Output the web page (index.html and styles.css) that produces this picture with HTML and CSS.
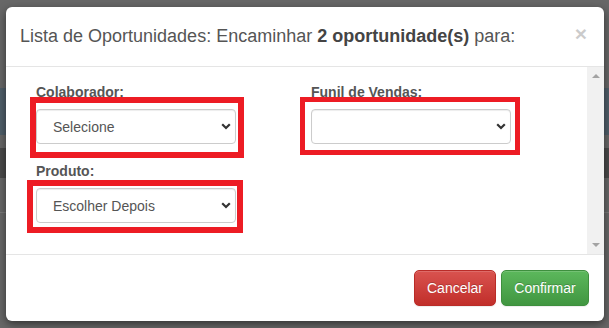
FILE: index.html
```html
<!DOCTYPE html>
<html lang="pt-BR">
<head>
    <meta charset="UTF-8">
    <title>Encaminhar Oportunidades</title>
    <link rel="stylesheet" href="styles.css">
</head>
<body>

    <div class="page">
        <div class="band band-top"></div>
        <div class="band band-blue"></div>
        <div class="band band-dark"></div>
        <div class="band band-line"></div>
    </div>

    <div class="modal">
        <div class="modal-header">
            <h4 class="modal-title">Lista de Oportunidades: Encaminhar <b>2 oportunidade(s)</b> para:</h4>
            <span class="close">&times;</span>
        </div>

        <div class="modal-body">
            <div class="body-content">
                <div class="row">
                    <div class="col">
                        <div class="form-group">
                            <label>Colaborador:</label>
                            <div class="select-wrap">
                                <select>
                                    <option>Selecione</option>
                                </select>
                                <svg class="chevron" width="10" height="7" viewBox="0 0 10 7"><path d="M1.2 1.2 L5 5 L8.8 1.2" fill="none" stroke="#333" stroke-width="2.2"/></svg>
                            </div>
                        </div>
                        <div class="form-group">
                            <label>Produto:</label>
                            <div class="select-wrap">
                                <select>
                                    <option>Escolher Depois</option>
                                </select>
                                <svg class="chevron" width="10" height="7" viewBox="0 0 10 7"><path d="M1.2 1.2 L5 5 L8.8 1.2" fill="none" stroke="#333" stroke-width="2.2"/></svg>
                            </div>
                        </div>
                    </div>
                    <div class="col">
                        <div class="form-group">
                            <label>Funil de Vendas:</label>
                            <div class="select-wrap">
                                <select>
                                    <option></option>
                                </select>
                                <svg class="chevron" width="10" height="7" viewBox="0 0 10 7"><path d="M1.2 1.2 L5 5 L8.8 1.2" fill="none" stroke="#333" stroke-width="2.2"/></svg>
                            </div>
                        </div>
                    </div>
                </div>
            </div>
            <div class="scrollbar">
                <span class="arrow-up"></span>
                <span class="arrow-down"></span>
            </div>
        </div>

        <div class="modal-footer">
            <button class="btn btn-danger">Cancelar</button>
            <button class="btn btn-success">Confirmar</button>
        </div>
    </div>

    <!-- marcações em vermelho -->
    <div class="mark mark-colaborador"></div>
    <div class="mark mark-produto"></div>
    <div class="mark mark-funil"></div>

</body>
</html>
```

FILE: styles.css
```css
body {
    margin: 0;
    width: 609px;
    height: 328px;
    overflow: hidden;
    background: #676767;
    font-family: "Liberation Sans", Arial, sans-serif;
    position: relative;
}
.page {
    display: flex;
    flex-direction: column;
}
.band-top { height: 88px; }
.band-blue { height: 47px; background: #4f5e69; }
.band-dark { height: 30px; background: #4a4a4a; margin-top: 13px; }
.band-line { height: 1px; background: #7a7a7a; margin-top: 34px; }

.modal {
    position: absolute;
    left: 6px;
    top: 7px;
    width: 598px;
    height: 314px;
    background: #fff;
    border-radius: 6px;
    box-shadow: 0 3px 9px rgba(0, 0, 0, 0.5);
    display: flex;
    flex-direction: column;
}
.modal-header {
    display: flex;
    justify-content: space-between;
    align-items: flex-start;
    padding: 17px 17px 17px 14px;
    border-bottom: 1px solid #e5e5e5;
}
.modal-title {
    margin: 0;
    font-size: 18px;
    font-weight: normal;
    line-height: 25px;
    color: #555;
}
.modal-title b { color: #444; }
.close {
    font-size: 21px;
    font-weight: bold;
    line-height: 1;
    color: #000;
    opacity: 0.2;
    margin-top: -1px;
}

.modal-body {
    flex: 1;
    display: flex;
    min-height: 0;
}
.body-content {
    flex: 1;
    padding: 15px 15px 0;
}
.row {
    display: flex;
}
.col {
    width: 275px;
    padding: 0 15px;
    box-sizing: border-box;
}
.form-group {
    margin-bottom: 17px;
}
label {
    display: block;
    font-size: 14px;
    font-weight: bold;
    line-height: 20px;
    color: #555;
    margin-bottom: 7px;
}
.select-wrap {
    position: relative;
    width: 200px;
}
select {
    appearance: none;
    -webkit-appearance: none;
    width: 200px;
    height: 35px;
    padding: 0 16px;
    font-family: inherit;
    font-size: 14px;
    color: #555;
    background: #fff;
    border: 1px solid #ccc;
    border-radius: 4px;
    box-shadow: inset 0 1px 1px rgba(0, 0, 0, 0.075);
}
.chevron {
    position: absolute;
    right: 5px;
    top: 14px;
    pointer-events: none;
}

.scrollbar {
    width: 17px;
    background: #f1f1f1;
    display: flex;
    flex-direction: column;
    justify-content: space-between;
    align-items: center;
    padding: 7px 0;
}
.arrow-up, .arrow-down {
    width: 0;
    height: 0;
    border-left: 4px solid transparent;
    border-right: 4px solid transparent;
}
.arrow-up { border-bottom: 4px solid #a3a3a3; }
.arrow-down { border-top: 4px solid #a3a3a3; }

.modal-footer {
    display: flex;
    justify-content: flex-end;
    gap: 5px;
    padding: 15px;
    border-top: 1px solid #e5e5e5;
}
.btn {
    font-family: inherit;
    font-size: 14px;
    line-height: 18px;
    padding: 8px 12px;
    color: #fff;
    border-radius: 5px;
    border: 1px solid;
    text-shadow: 0 -1px 0 rgba(0, 0, 0, 0.2);
    box-shadow: inset 0 1px 0 rgba(255, 255, 255, 0.15), 0 1px 1px rgba(0, 0, 0, 0.075);
}
.btn-danger {
    width: 82px;
    background: linear-gradient(to bottom, #d9534f 0, #c12e2a 100%);
    border-color: #b92c28;
}
.btn-success {
    width: 88px;
    background: linear-gradient(to bottom, #5cb85c 0, #419641 100%);
    border-color: #3e8f3e;
}

.mark {
    position: absolute;
    border: 6px solid #ed1c24;
    box-sizing: border-box;
}
.mark-colaborador { left: 30px; top: 97px; width: 214px; height: 61px; }
.mark-produto { left: 27px; top: 180px; width: 216px; height: 53px; }
.mark-funil { left: 300px; top: 97px; width: 220px; height: 58px; border-width: 5px; }
```
